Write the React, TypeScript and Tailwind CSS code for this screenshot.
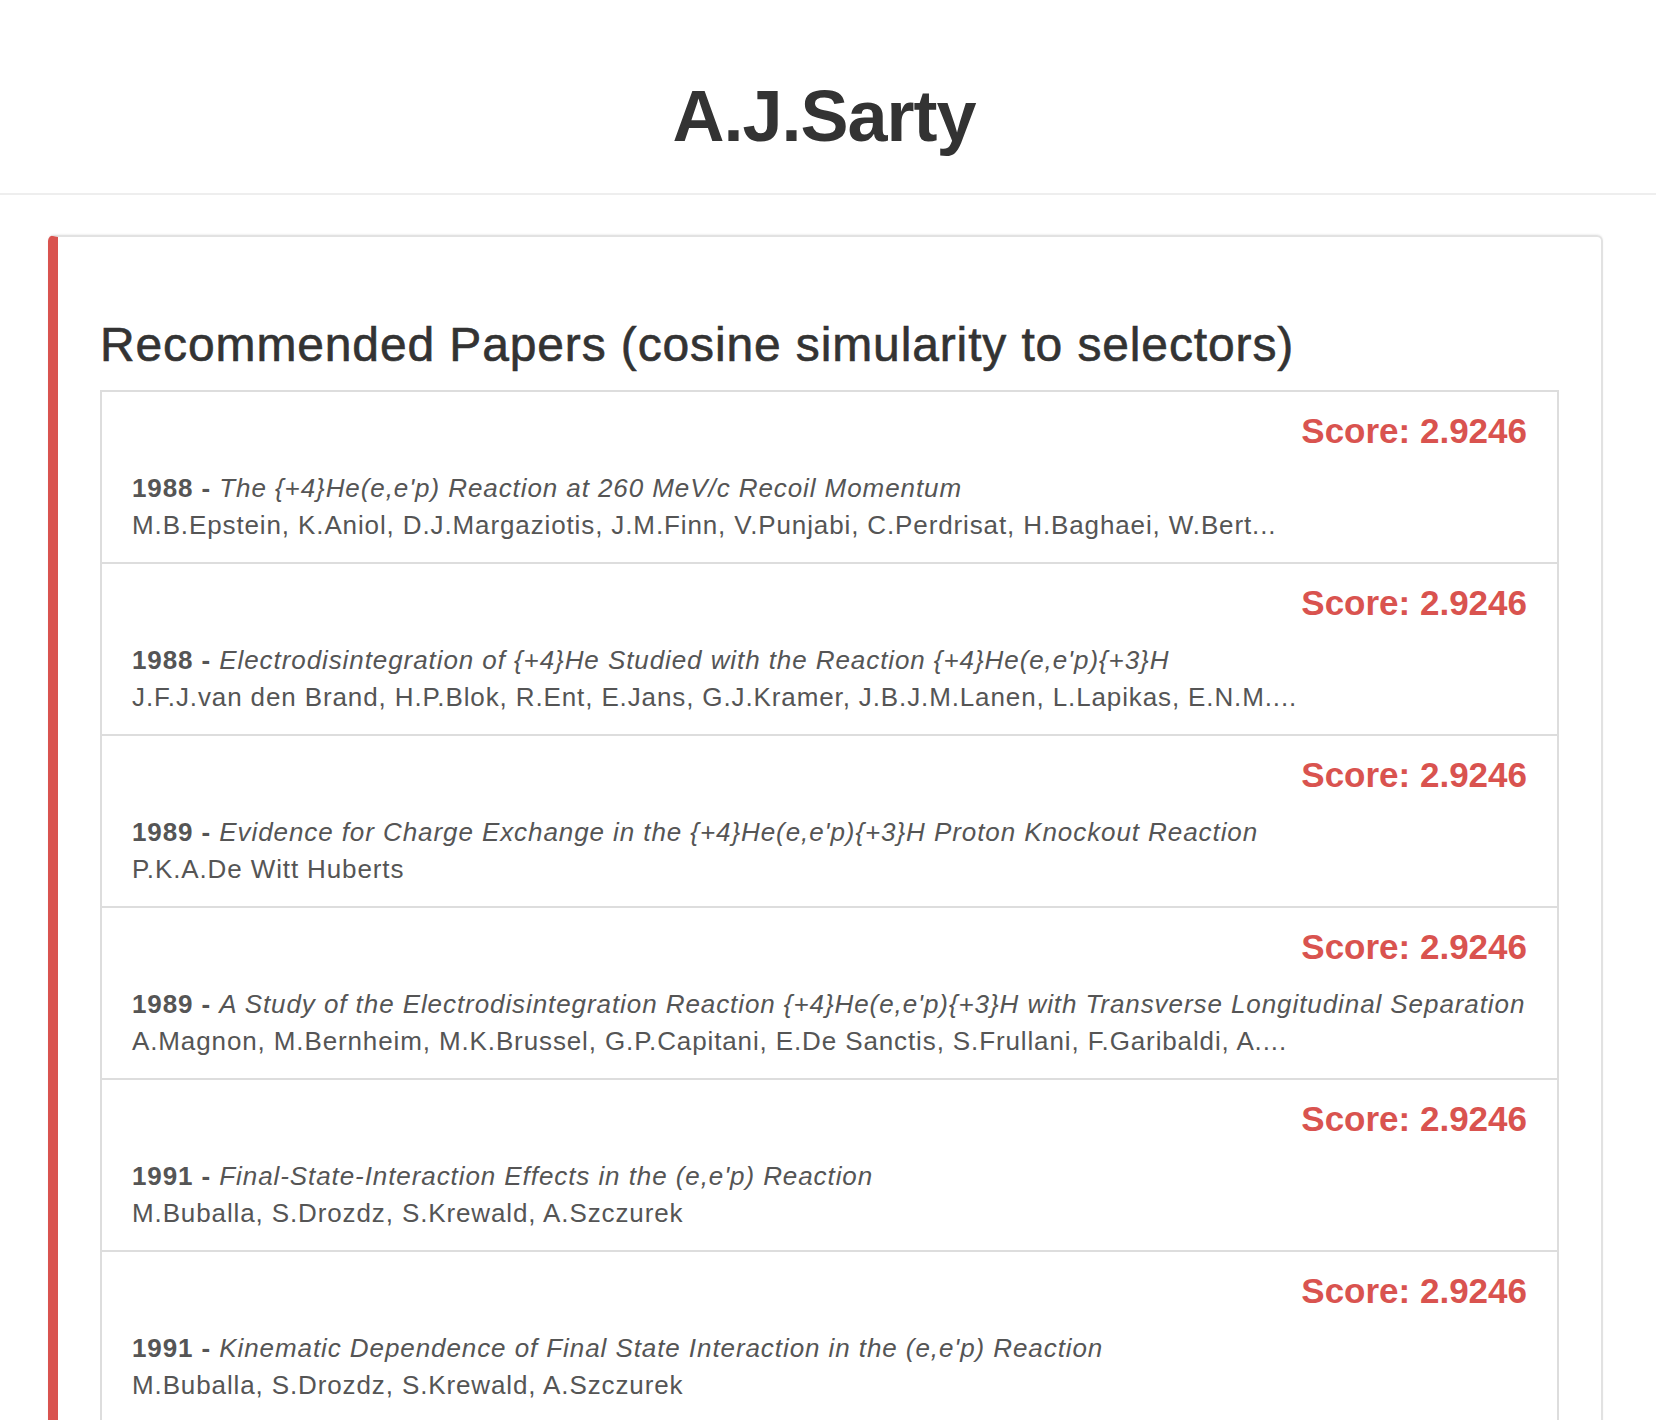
const papers = [
  {
    year: '1988',
    title: "The {+4}He(e,e'p) Reaction at 260 MeV/c Recoil Momentum",
    authors: 'M.B.Epstein, K.Aniol, D.J.Margaziotis, J.M.Finn, V.Punjabi, C.Perdrisat, H.Baghaei, W.Bert...',
  },
  {
    year: '1988',
    title: "Electrodisintegration of {+4}He Studied with the Reaction {+4}He(e,e'p){+3}H",
    authors: 'J.F.J.van den Brand, H.P.Blok, R.Ent, E.Jans, G.J.Kramer, J.B.J.M.Lanen, L.Lapikas, E.N.M....',
  },
  {
    year: '1989',
    title: "Evidence for Charge Exchange in the {+4}He(e,e'p){+3}H Proton Knockout Reaction",
    authors: 'P.K.A.De Witt Huberts',
  },
  {
    year: '1989',
    title: "A Study of the Electrodisintegration Reaction {+4}He(e,e'p){+3}H with Transverse Longitudinal Separation",
    authors: 'A.Magnon, M.Bernheim, M.K.Brussel, G.P.Capitani, E.De Sanctis, S.Frullani, F.Garibaldi, A....',
  },
  {
    year: '1991',
    title: "Final-State-Interaction Effects in the (e,e'p) Reaction",
    authors: 'M.Buballa, S.Drozdz, S.Krewald, A.Szczurek',
  },
  {
    year: '1991',
    title: "Kinematic Dependence of Final State Interaction in the (e,e'p) Reaction",
    authors: 'M.Buballa, S.Drozdz, S.Krewald, A.Szczurek',
  },
];

export default function App() {
  return (
    <div className="min-h-screen bg-white font-['Liberation_Sans',Arial,sans-serif] text-[#333]">
      {/* page header */}
      <header className="border-b-2 border-[#eee] pt-[77px] pb-[37px] pr-[8px] text-center">
        <h1 className="text-[72px] font-bold leading-[1.1] tracking-[-1px] text-[#333]">A.J.Sarty</h1>
      </header>

      {/* callout */}
      <div className="mt-[40px] ml-[48px] w-[1555px] rounded-[6px] border-2 border-l-[10px] border-[#e2e2e2] border-l-[#d9534f] px-[42px] pt-[82px] pb-[40px] shadow-[0_-1px_2px_rgba(0,0,0,0.06)]">
        <h3 className="mb-[18px] text-[48px] leading-[1.1] tracking-[0.87px] text-[#333] [-webkit-text-stroke:0.6px_#333]">
          Recommended Papers (cosine simularity to selectors)
        </h3>

        <ul className="border-2 border-[#ddd] divide-y-2 divide-[#ddd]">
          {papers.map((p, i) => (
            <li key={i} className="px-[30px] pt-[20px] pb-[18px]">
              <h4 className="mb-[20px] text-right text-[35px] font-bold leading-[38px] text-[#d9534f]">
                Score: 2.9246
              </h4>
              <div className="whitespace-nowrap text-[26px] leading-[37px] text-[#555]">
                <b className="tracking-[0.9px]">{p.year} - </b>
                <i className="tracking-[0.92px]">{p.title}</i>
              </div>
              <div className="whitespace-nowrap text-[26px] leading-[37px] tracking-[0.88px] text-[#555]">
                {p.authors}
              </div>
            </li>
          ))}
        </ul>
      </div>
    </div>
  );
}
